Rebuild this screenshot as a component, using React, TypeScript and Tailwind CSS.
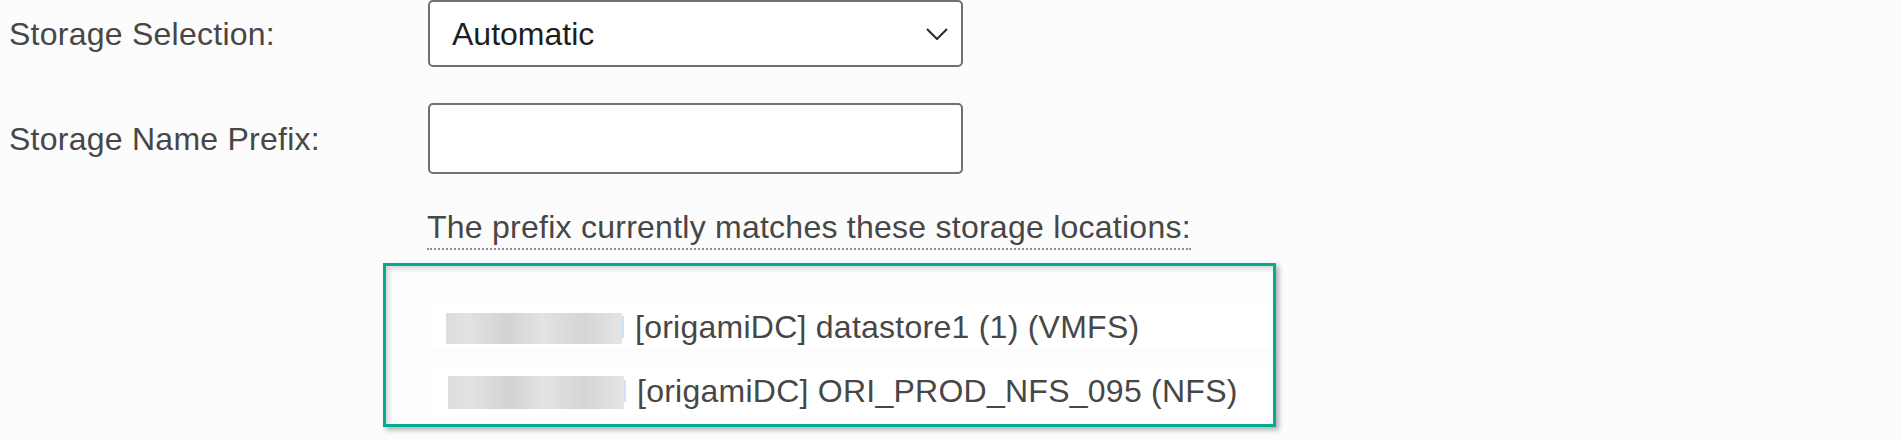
import React from "react";

const rows = [
  { text: "[origamiDC] datastore1 (1) (VMFS)", blurTop: "mt-[9px]", blurH: "h-[31px]", blurL: "ml-[14px]", rowH: "h-[45px]" },
  { text: "[origamiDC] ORI_PROD_NFS_095 (NFS)", blurTop: "mt-[8px]", blurH: "h-[33px]", blurL: "ml-[16px]", rowH: "h-[46px]" },
];

export default function App() {
  return (
    <div
      className="w-full h-[441px] overflow-hidden bg-[#fcfcfc] text-[32px] leading-[36px] tracking-[0.25px] text-[#474747]"
      style={{ fontFamily: '"Liberation Sans", Arial, sans-serif' }}
    >
      {/* Storage Selection */}
      <div className="flex items-center pl-[9px]">
        <div className="w-[419px] shrink-0">Storage Selection:</div>
        <div className="w-[535px] h-[67px] shrink-0 flex items-center justify-between border-2 border-[#717171] rounded-[5px] bg-white pl-[22px] pr-[12px]">
          <span className="text-[#1e1e1e] tracking-normal">Automatic</span>
          <svg width="22" height="12" viewBox="0 0 22 12" className="mr-[1px]">
            <polyline points="1,1 11,11 21,1" fill="none" stroke="#2a2a2a" strokeWidth="2" />
          </svg>
        </div>
      </div>

      {/* Storage Name Prefix */}
      <div className="flex items-center pl-[9px] mt-[36px]">
        <div className="w-[419px] shrink-0">Storage Name Prefix:</div>
        <div className="w-[535px] h-[71px] shrink-0 border-2 border-[#717171] rounded-[5px] bg-white" />
      </div>

      {/* Help text */}
      <div className="pl-[427px] mt-[35px]">
        <span className="inline-block pb-[3px] border-b-2 border-dotted border-[#8c8c8c]">
          The prefix currently matches these storage locations:
        </span>
      </div>

      {/* Matches box */}
      <div className="ml-[383px] mt-[13px] w-[893px] h-[164px] border-[3px] border-[#00ab8e] bg-[#fdfdfd] shadow-[3px_3px_5px_rgba(0,0,0,0.3),inset_3px_3px_5px_rgba(0,0,0,0.15)] pt-[38px] pl-[46px] flex flex-col gap-[19px]">
        {rows.map((r) => (
          <div key={r.text} className={`${r.rowH} bg-white flex items-start`}>
            <div
              className={`${r.blurTop} ${r.blurH} ${r.blurL} w-[176px] shrink-0 bg-[linear-gradient(90deg,#dcdcdc_0%,#e2e2e2_12%,#d3d3d3_35%,#e3e3e3_55%,#d5d5d5_78%,#e5e5e5_100%)]`}
            />
            <div className="mt-[12px] w-[2px] h-[22px] shrink-0 bg-[#cfe3f5]" />
            <div className="ml-[11px] self-center whitespace-nowrap">{r.text}</div>
          </div>
        ))}
      </div>
    </div>
  );
}
